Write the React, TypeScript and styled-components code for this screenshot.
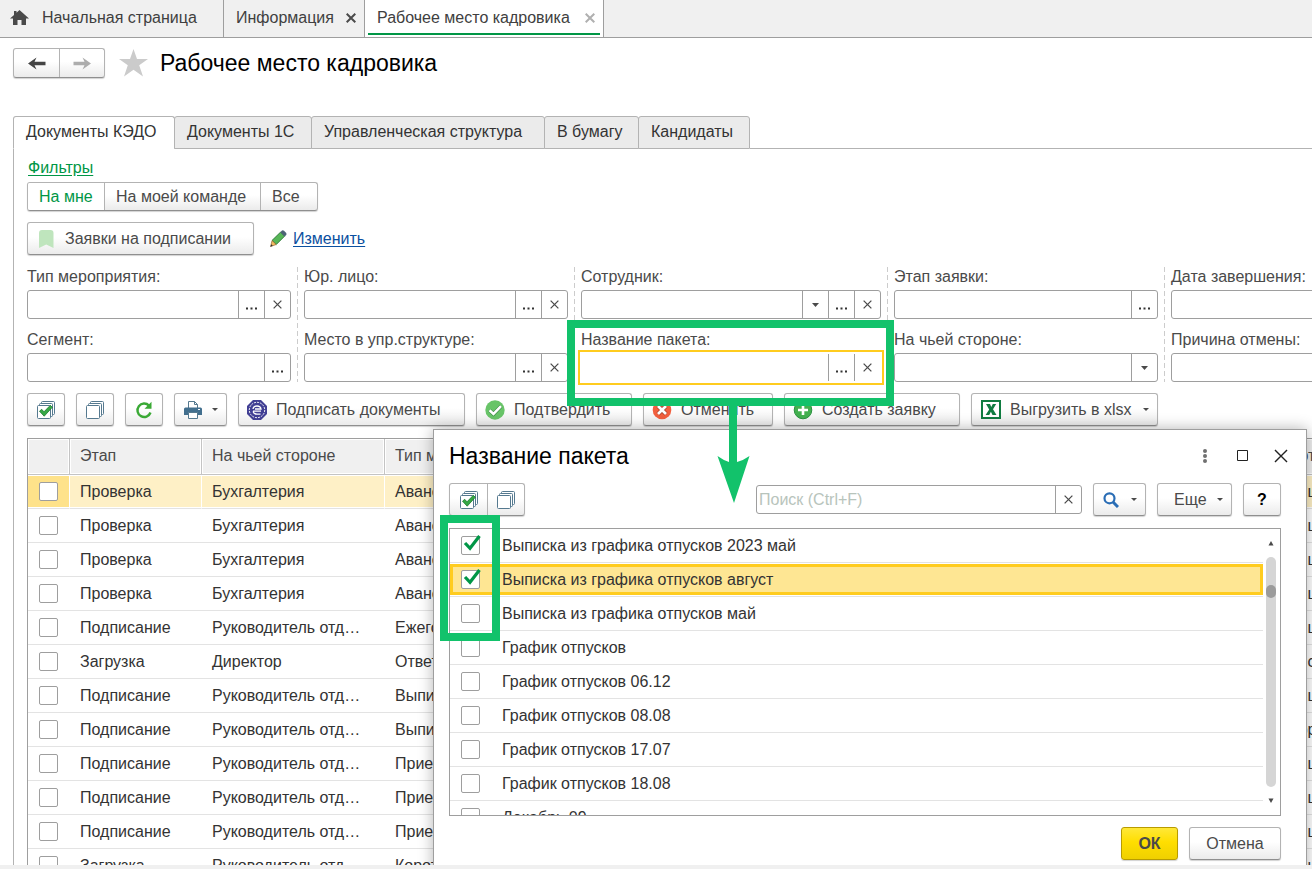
import React from "react";
import styled, { createGlobalStyle, css } from "styled-components";

const GlobalStyle = createGlobalStyle`
  * { box-sizing: border-box; }
  body {
    margin: 0;
    background: #fff;
    color: #4a4a4a;
    font: 16px/19px "Liberation Sans", Arial, sans-serif;
    overflow: hidden;
  }
  button, input { font: inherit; color: inherit; }
  svg { display: block; flex: none; }
`;

const line = "#9e9e9e";
const softLine = "#b3b3b3";
const green = "#009646";
const marker = "#12c26b";
const yellow = "#ffcc1f";

const Shell = styled.div`
  display: flex;
  flex-direction: column;
  height: 100vh;
`;

/* ---------- open windows bar ---------- */

const WindowBar = styled.nav`
  display: flex;
  flex: none;
  height: 38px;
  background: #f0f0f0;
  border-bottom: 1px solid ${line};
`;

const WindowTab = styled.div<{ $width: number; $active?: boolean }>`
  position: relative;
  display: flex;
  align-items: center;
  justify-content: space-between;
  width: ${(p) => p.$width}px;
  padding: 0 8px 2px 12px;
  border-right: 1px solid ${line};
  color: #404040;
  white-space: nowrap;
  ${(p) =>
    p.$active &&
    css`
      background: #fff;
      &::after {
        content: "";
        position: absolute;
        left: 3px;
        right: 3px;
        bottom: 2px;
        height: 2px;
        background: ${green};
      }
    `}
`;

const HomeTab = styled(WindowTab)`
  gap: 13px;
  justify-content: flex-start;
  padding-left: 10px;
`;

const PlainButton = styled.button`
  display: flex;
  align-items: center;
  justify-content: center;
  padding: 0;
  border: 0;
  background: none;
  white-space: nowrap;
`;

/* ---------- page header ---------- */

const Workspace = styled.main`
  position: relative;
  flex: 1;
  min-height: 0;
  overflow: hidden;
`;

const BottomStrip = styled.footer`
  flex: none;
  height: 4px;
  background: #f0f0f0;
`;

const PageHeader = styled.header`
  display: flex;
  align-items: flex-start;
  height: 78px;
  padding: 10px 13px;
`;

const raised = css`
  border: 1px solid ${softLine};
  border-bottom-color: #8f8f8f;
  border-radius: 3px;
  background: linear-gradient(#fff 0%, #fff 45%, #ebebeb 100%);
  box-shadow: 0 1px 1px rgba(0, 0, 0, 0.18);
`;

const SplitGroup = styled.div<{ $height: number }>`
  ${raised}
  display: inline-flex;
  height: ${(p) => p.$height}px;
  overflow: hidden;
`;

const SplitButton = styled(PlainButton)<{ $width: number; $on?: boolean }>`
  width: ${(p) => p.$width}px;
  background: ${(p) => (p.$on ? "#fff" : "none")};
  color: ${(p) => (p.$on ? green : "inherit")};
  & + & {
    border-left: 1px solid ${softLine};
  }
`;

const ScopeButton = styled(SplitButton)`
  justify-content: flex-start;
  padding-left: 11px;
`;

const StarButton = styled(PlainButton)`
  margin: 0 12px 0 14px;
`;

const PageTitle = styled.h1`
  margin: 0;
  color: #000;
  font-size: 23px;
  font-weight: 400;
  line-height: 30px;
`;

/* ---------- page tabs ---------- */

const PageTabs = styled.div`
  display: flex;
  padding-left: 13px;
  height: 33px;
  &::after {
    content: "";
    flex: 1;
    border-bottom: 1px solid ${softLine};
  }
`;

const PageTab = styled.button<{ $width: number; $active?: boolean }>`
  width: ${(p) => p.$width}px;
  padding: 0 0 2px 12px;
  border: 1px solid ${softLine};
  border-bottom-color: ${(p) => (p.$active ? "#fff" : softLine)};
  border-radius: 3px 3px 0 0;
  background: ${(p) => (p.$active ? "#fff" : "#ebebeb")};
  color: #333;
  text-align: left;
  white-space: nowrap;
  & + & {
    margin-left: -1px;
  }
`;

const Panel = styled.section`
  display: flex;
  flex-direction: column;
  align-items: flex-start;
  min-height: 100%;
  margin-left: 13px;
  padding: 9px 0 0 13px;
  border-left: 1px solid ${softLine};
`;

const Link = styled.a<{ $color: string }>`
  color: ${(p) => p.$color};
  text-decoration: underline;
  text-underline-offset: 2px;
`;

const FilterLink = styled(Link)`
  margin: 0 0 5px 1px;
`;

const RequestRow = styled.div`
  display: flex;
  align-items: center;
  margin: 11px 0 12px;
`;

const Button = styled.button<{ $width: number }>`
  ${raised}
  display: flex;
  flex: none;
  align-items: center;
  justify-content: center;
  gap: 9px;
  width: ${(p) => p.$width}px;
  height: 33px;
  padding: 0;
  white-space: nowrap;
`;

const LabelButton = styled(Button)`
  justify-content: flex-start;
  padding-left: 8px;
`;

const MenuButton = styled(Button)`
  justify-content: space-between;
  padding: 0 8px 0 9px;
`;

const MoreButton = styled(MenuButton)`
  padding-left: 16px;
`;

const MenuCaption = styled.span`
  display: flex;
  align-items: center;
  gap: 9px;
`;

const EditLink = styled.span`
  display: flex;
  align-items: center;
  gap: 6px;
  margin-left: 16px;
`;

/* ---------- filters ---------- */

const Filters = styled.div`
  display: flex;
`;

const FilterColumn = styled.div<{ $width: number }>`
  display: flex;
  flex: none;
  flex-direction: column;
  gap: 11px;
  width: ${(p) => p.$width}px;
`;

const Divider = styled.div`
  width: 1px;
  margin: 0 6px;
  background: repeating-linear-gradient(#ccc 0 5px, transparent 5px 8px);
`;

const FieldLabel = styled.label`
  display: block;
  margin-bottom: 4px;
  white-space: nowrap;
`;

const FieldBox = styled.div<{ $focused?: boolean }>`
  display: flex;
  height: 29px;
  border: 1px solid ${(p) => (p.$focused ? "#fff" : line)};
  border-radius: 3px;
  background: #fff;
  ${(p) =>
    p.$focused &&
    css`
      border-radius: 0;
      outline: 2px solid ${yellow};
      outline-offset: 1px;
    `}
`;

const FieldInput = styled.input`
  flex: 1;
  min-width: 0;
  padding: 0 2px;
  border: 0;
  outline: 0;
  background: none;
  &::placeholder {
    color: #b8c4bc;
    opacity: 1;
  }
`;

const FieldButton = styled(PlainButton)`
  width: 26px;
  padding-right: 1px;
  border-left: 1px solid ${line};
`;

/* ---------- command bar ---------- */

const Commands = styled.div`
  display: flex;
  gap: 11px;
  margin: 11px 0 12px;
`;

/* ---------- table ---------- */

const TableFrame = styled.div`
  align-self: stretch;
  overflow: hidden;
  border: 1px solid ${line};
  border-width: 1px 0 0 1px;
`;

const Table = styled.table`
  width: 1451px;
  table-layout: fixed;
  border-collapse: separate;
  border-spacing: 0;
  color: #333;
`;

const Th = styled.th`
  height: 36px;
  padding: 0 0 2px 10px;
  border-right: 1px solid #c4c4c4;
  border-bottom: 1px solid #c4c4c4;
  background: #f0f0f0;
  box-shadow: inset 0 0 0 1px #fff;
  color: #4a4a4a;
  font-weight: 400;
  text-align: left;
  white-space: nowrap;
`;

const Td = styled.td`
  height: 34px;
  padding: 0 0 0 10px;
  border-bottom: 1px solid #e3e3e3;
  white-space: nowrap;
  &:first-child {
    padding-left: 11px;
  }
`;

const Tr = styled.tr<{ $selected?: boolean }>`
  ${(p) =>
    p.$selected &&
    css`
      ${Td} {
        background: #fef0c6;
        border-right: 1px solid #fff;
        box-shadow: inset 0 1px #fff, inset 0 -1px #fff;
      }
      ${Td}:first-child {
        background: #fee28a;
      }
    `}
`;

/* ---------- check box ---------- */

const CheckWrap = styled.span`
  position: relative;
  display: block;
  flex: none;
  width: 19px;
  height: 19px;
`;

const CheckInput = styled.input`
  appearance: none;
  display: block;
  width: 19px;
  height: 19px;
  margin: 0;
  border: 1px solid ${line};
  border-radius: 2px;
  background: #fff;
`;

const CheckMark = styled.svg`
  position: absolute;
  left: 2px;
  top: -2px;
  pointer-events: none;
`;

/* ---------- dialog ---------- */

const Dialog = styled.section`
  position: absolute;
  top: 391px;
  left: 433px;
  right: 5px;
  padding: 10px 25px 20px 15px;
  border: 1px solid ${line};
  background: #fff;
  box-shadow: 0 0 14px rgba(0, 0, 0, 0.3);
`;

const DialogHeader = styled.div`
  display: flex;
  align-items: center;
  height: 31px;
  margin-right: -19px;
`;

const DialogTitle = styled.h2`
  flex: 1;
  margin: 0;
  padding-top: 2px;
  color: #000;
  font-size: 23px;
  font-weight: 400;
  line-height: 31px;
`;

const ControlButton = styled(PlainButton)`
  width: 38px;
  height: 28px;
`;

const DialogTools = styled.div`
  display: flex;
  align-items: center;
  gap: 11px;
  margin: 12px 0;
`;

const SearchBox = styled(FieldBox)`
  width: 326px;
  margin-left: auto;
`;

const HelpMark = styled.span`
  color: #000;
  font-weight: 700;
`;

const ListFrame = styled.div`
  display: flex;
  height: 288px;
  overflow: hidden;
  border: 1px solid ${line};
`;

const List = styled.ul`
  flex: 1;
  margin: 0;
  padding: 0;
  list-style: none;
  color: #333;
`;

const ListItem = styled.li`
  padding: 1px 0;
  border-bottom: 1px solid #e3e3e3;
`;

const ItemLabel = styled.label<{ $current?: boolean }>`
  display: flex;
  align-items: center;
  gap: 22px;
  height: 31px;
  padding: 0 8px;
  border: 3px solid ${(p) => (p.$current ? yellow : "transparent")};
  background: ${(p) => (p.$current ? "#fee693" : "#fff")};
`;

const ScrollBar = styled.div`
  display: flex;
  flex-direction: column;
  align-items: center;
  gap: 10px;
  width: 17px;
  padding: 11px 1px 11px 0;
`;

const ScrollTrack = styled.div`
  flex: 1;
  width: 10px;
  padding-top: 28px;
  border-radius: 5px;
  background: #d5d5d5;
`;

const ScrollThumb = styled.div`
  height: 13px;
  border-radius: 5px;
  background: #9b9b9b;
`;

const DialogActions = styled.div`
  display: flex;
  justify-content: flex-end;
  gap: 11px;
  margin-top: 11px;
`;

const PrimaryButton = styled(Button)`
  border-color: #b89b00;
  background: linear-gradient(#ffe838 0%, #ffde00 45%, #efd000 100%);
  font-weight: 700;
`;

/* ---------- callouts ---------- */

const Frame = styled.div<{ $x: number; $y: number; $w: number; $h: number }>`
  position: absolute;
  left: ${(p) => p.$x}px;
  top: ${(p) => p.$y}px;
  width: ${(p) => p.$w}px;
  height: ${(p) => p.$h}px;
  border: 8px solid ${marker};
  pointer-events: none;
`;

const Arrow = styled.svg`
  position: absolute;
  left: 717px;
  top: 366px;
  pointer-events: none;
`;

/* ---------- icons ---------- */

const HomeIcon = () => (
  <svg width="19" height="16" viewBox="0 0 19 16" fill="#4a4a4a">
    <path d="M9.500 0 19 8.500H16V15H11.500V10H7.500V15H3V8.500H0L4 5V1H6.500V2.700Z" />
  </svg>
);

const CrossIcon = ({ size = 10, color = "#4a4a4a", weight = 1.4 }) => (
  <svg width={size} height={size} viewBox="0 0 10 10" stroke={color} strokeWidth={weight} fill="none">
    <path d="M.7.7 9.300 9.300M9.300.7.7 9.300" />
  </svg>
);

const NavArrow = ({ color, flip }: { color: string; flip?: boolean }) => (
  <svg width="18" height="13" viewBox="0 0 18 13" fill={color}>
    <path d={flip ? "M18 6.500 9.500 .5 11.500 4.800H.5V8.200H11.500L9.500 12.500Z" : "M0 6.500 8.500 .5 6.500 4.800H17.500V8.200H6.500L8.500 12.500Z"} />
  </svg>
);

const StarIcon = () => (
  <svg width="29" height="29" viewBox="0 0 29 29" fill="#cbcbcb">
    <path d="M14.500 1 18 11H29L20.200 17.300 24 28.500 14.500 21.700 5 28.500 8.800 17.300 0 11H11Z" />
  </svg>
);

const BookmarkIcon = () => (
  <svg width="20" height="18" viewBox="0 0 20 18" fill="#bfe5bd">
    <path d="M3 3Q3 0 6 0H14.500Q17.500 0 17.500 3V18L10.200 14.500 3 18Z" />
  </svg>
);

const PencilIcon = () => (
  <svg width="17" height="17" viewBox="0 0 17 17">
    <path d="M2 10.500 10.500 2.200 14.500 6.200 6.200 14.500Z" fill="#57b757" stroke="#2e7d3a" />
    <path d="M2 10.500 6.200 14.500 .6 16.600Z" fill="#f2b95f" stroke="#8a5a2b" strokeWidth=".6" />
    <path d="M1.300 14.300 2.800 15.800 .3 16.800Z" fill="#333" />
    <path d="M10.300 2.200 12 .6Q13 0 14 .8L16 2.800Q17 4 16.200 5L14.700 6.400Z" fill="#4d6475" />
  </svg>
);

const DotsIcon = () => (
  <svg width="11" height="3" viewBox="0 0 11 3" fill="#333">
    <path d="M0 .5H2V2.500H0ZM4.500 .5H6.500V2.500H4.500ZM9 .5H11V2.500H9Z" />
  </svg>
);

const CaretIcon = () => (
  <svg width="7" height="4" viewBox="0 0 7 4" fill="#4a4a4a">
    <path d="M0 0H7L3.500 4Z" />
  </svg>
);

const SmallCaret = () => (
  <svg width="6" height="3" viewBox="0 0 6 3" fill="#4a4a4a">
    <path d="M0 0H6L3 3Z" />
  </svg>
);

const StackIcon = ({ checked }: { checked?: boolean }) => (
  <svg width="18" height="18" viewBox="0 0 18 18" fill="#fff" stroke="#55798f">
    <rect x="4.500" y=".5" width="13" height="13" rx="1" />
    <rect x="2.500" y="2.500" width="13" height="13" rx="1" />
    <rect x=".5" y="4.500" width="13" height="13" rx="1" />
    {checked && <path d="M2.500 10.200 4.700 8.300 7 10.800 13.300 4.300 15.300 6.300 7.200 15.200Z" fill="#35a845" stroke="#1c7a30" strokeWidth=".8" />}
  </svg>
);

const RefreshIcon = () => (
  <svg width="18" height="18" viewBox="0 0 18 18">
    <path d="M14 4.600A6.700 6.700 0 1 0 15.500 11.500" fill="none" stroke="#3aa935" strokeWidth="2.400" />
    <path d="M16.500 .8V7.800H9.500Z" fill="#3aa935" />
  </svg>
);

const PrinterIcon = () => (
  <svg width="18" height="18" viewBox="0 0 18 18">
    <path d="M4.500 7V.5H10.500L13.500 3.500V7" fill="#fff" stroke="#55798f" />
    <path d="M10.500 .5V3.500H13.500" fill="none" stroke="#55798f" />
    <path d="M1.500 6.500H16.500Q18 6.500 18 8V14H0V8Q0 6.500 1.500 6.500Z" fill="#426f8e" />
    <path d="M4.500 11.500H13.500V17.500H4.500Z" fill="#fff" stroke="#55798f" />
    <path d="M14 8.500H16" stroke="#fff" />
  </svg>
);

const SealIcon = () => (
  <svg width="20" height="20" viewBox="0 0 20 20">
    <path d="M6 0H14L20 6V14L14 20H6L0 14V6Z" fill="#413f94" />
    <circle cx="10" cy="10" r="7.700" fill="none" stroke="#fff" strokeWidth=".9" strokeDasharray="2 1" />
    <path d="M6 9Q6.500 6 10 6T14 9H8M14 11.200H6M6 11.500Q7 14.200 10 14.200H13.500" fill="none" stroke="#fff" strokeWidth="1.300" />
  </svg>
);

const ConfirmIcon = () => (
  <svg width="20" height="20" viewBox="0 0 20 20">
    <circle cx="10" cy="10" r="9.700" fill="#68c468" />
    <path d="M4.500 10.200 8.500 14 16 6.200" fill="none" stroke="#2f7f3a" strokeWidth="3.600" />
    <path d="M4.500 10.200 8.500 14 16 6.200" fill="none" stroke="#fff" strokeWidth="2.600" />
  </svg>
);

const RejectIcon = () => (
  <svg width="20" height="20" viewBox="0 0 20 20">
    <circle cx="10" cy="10" r="9.300" fill="#f15f3e" />
    <path d="M6 6 14 14M14 6 6 14" stroke="#9c3a22" strokeWidth="4" />
    <path d="M6 6 14 14M14 6 6 14" stroke="#fff" strokeWidth="2.800" />
  </svg>
);

const AddIcon = () => (
  <svg width="20" height="20" viewBox="0 0 20 20">
    <circle cx="10" cy="10" r="8.800" fill="#43b04f" stroke="#2b9140" />
    <path d="M10 5V15M5 10H15" stroke="#fff" strokeWidth="2.600" />
  </svg>
);

const SheetIcon = () => (
  <svg width="20" height="19" viewBox="0 0 20 19">
    <rect x="1" y="1" width="18" height="17" fill="#fff" stroke="#107c41" strokeWidth="2" />
    <path d="M5 4H9L10.300 7 11.800 4H15.200L12 9.300 15.500 15H11.500L9.900 11.800 8.200 15H4.600L8.200 9.400Z" fill="#107c41" />
  </svg>
);

const SearchIcon = () => (
  <svg width="16" height="16" viewBox="0 0 16 16" fill="none" stroke="#2a6db5">
    <circle cx="6.500" cy="6.300" r="5" strokeWidth="2.200" />
    <path d="M10 10 15 15" strokeWidth="3" />
  </svg>
);

const KebabIcon = () => (
  <svg width="4" height="14" viewBox="0 0 4 14" fill="#707070">
    <circle cx="2" cy="2" r="2" />
    <circle cx="2" cy="7" r="2" />
    <circle cx="2" cy="12" r="2" />
  </svg>
);

const MaximizeIcon = () => (
  <svg width="12" height="12" viewBox="0 0 12 12" fill="none" stroke="#222">
    <path d="M.5 .5H10.500V10.500H.5Z" />
  </svg>
);

const ScrollArrow = ({ down }: { down?: boolean }) => (
  <svg width="6" height="7" viewBox="0 0 6 7" fill="#4a4a4a">
    <path d={down ? "M.5 1.500H5.500L3 6Z" : "M.5 5.500H5.500L3 1Z"} />
  </svg>
);

/* ---------- composite parts ---------- */

const Check = ({ label, checked }: { label?: string; checked?: boolean }) => (
  <CheckWrap>
    <CheckInput type="checkbox" defaultChecked={checked} aria-label={label} />
    {checked && (
      <CheckMark width="18" height="18" viewBox="0 0 18 18">
        <path d="M2 9 7 14.300 16.500 2" fill="none" stroke={green} strokeWidth="3.200" />
      </CheckMark>
    )}
  </CheckWrap>
);

type Control = "list" | "pick" | "clear";

interface FieldSpec {
  id: string;
  label: string;
  controls: Control[];
  focused?: boolean;
}

const controlNames: Record<Control, string> = { list: "Список", pick: "Выбрать", clear: "Очистить" };

const PickDots = styled.span`
  padding-top: 8px;
`;

const ControlIcon = ({ kind }: { kind: Control }) => {
  if (kind === "list") return <CaretIcon />;
  if (kind === "clear") return <CrossIcon size={9} />;
  return (
    <PickDots>
      <DotsIcon />
    </PickDots>
  );
};

const Field = ({ id, label, controls, focused }: FieldSpec) => (
  <div>
    <FieldLabel htmlFor={id}>{label}</FieldLabel>
    <FieldBox $focused={focused}>
      <FieldInput id={id} type="text" />
      {controls.map((kind) => (
        <FieldButton key={kind} type="button" aria-label={controlNames[kind]}>
          <ControlIcon kind={kind} />
        </FieldButton>
      ))}
    </FieldBox>
  </div>
);

/* ---------- data ---------- */

const filterColumns: { width: number; fields: FieldSpec[] }[] = [
  {
    width: 264,
    fields: [
      { id: "event", label: "Тип мероприятия:", controls: ["pick", "clear"] },
      { id: "segment", label: "Сегмент:", controls: ["pick"] },
    ],
  },
  {
    width: 264,
    fields: [
      { id: "entity", label: "Юр. лицо:", controls: ["pick", "clear"] },
      { id: "place", label: "Место в упр.структуре:", controls: ["pick", "clear"] },
    ],
  },
  {
    width: 300,
    fields: [
      { id: "employee", label: "Сотрудник:", controls: ["list", "pick", "clear"] },
      { id: "package", label: "Название пакета:", controls: ["pick", "clear"], focused: true },
    ],
  },
  {
    width: 264,
    fields: [
      { id: "stage", label: "Этап заявки:", controls: ["pick"] },
      { id: "side", label: "На чьей стороне:", controls: ["list"] },
    ],
  },
  {
    width: 264,
    fields: [
      { id: "finish", label: "Дата завершения:", controls: ["pick"] },
      { id: "reason", label: "Причина отмены:", controls: ["pick"] },
    ],
  },
];

const rows = [
  ["Проверка", "Бухгалтерия", "Авансовый отчет", "Лищенко"],
  ["Проверка", "Бухгалтерия", "Авансовый отчет", "Лищенко"],
  ["Проверка", "Бухгалтерия", "Авансовый отчет", "Лищенко"],
  ["Проверка", "Бухгалтерия", "Авансовый отчет", "Лищенко"],
  ["Подписание", "Руководитель отд…", "Ежегодный отпуск", "Лищенко"],
  ["Загрузка", "Директор", "Ответ на запрос", "Лисин"],
  ["Подписание", "Руководитель отд…", "Выписка из графика", "Лищенко"],
  ["Подписание", "Руководитель отд…", "Выписка из графика", "Воронов"],
  ["Подписание", "Руководитель отд…", "Прием на работу", "Лищенко"],
  ["Подписание", "Руководитель отд…", "Прием на работу", "Лищенко"],
  ["Подписание", "Руководитель отд…", "Прием на работу", "Лищенко"],
  ["Загрузка", "Руководитель отд…", "Короткий отпуск", "Лищенко"],
];

const packages = [
  { name: "Выписка из графика отпусков 2023 май", checked: true },
  { name: "Выписка из графика отпусков август", checked: true, current: true },
  { name: "Выписка из графика отпусков май" },
  { name: "График отпусков" },
  { name: "График отпусков 06.12" },
  { name: "График отпусков 08.08" },
  { name: "График отпусков 17.07" },
  { name: "График отпусков 18.08" },
  { name: "Декабрь 09" },
];

export default function App() {
  return (
    <Shell>
      <GlobalStyle />
      <WindowBar>
        <HomeTab $width={224}>
          <HomeIcon />
          Начальная страница
        </HomeTab>
        <WindowTab $width={141}>
          Информация
          <PlainButton type="button" aria-label="Закрыть">
            <CrossIcon weight={2} />
          </PlainButton>
        </WindowTab>
        <WindowTab $width={239} $active>
          Рабочее место кадровика
          <PlainButton type="button" aria-label="Закрыть">
            <CrossIcon weight={2} color="#b0b0b0" />
          </PlainButton>
        </WindowTab>
      </WindowBar>

      <Workspace>
        <PageHeader>
          <SplitGroup $height={30}>
            <SplitButton $width={45} type="button" aria-label="Назад">
              <NavArrow color="#444" />
            </SplitButton>
            <SplitButton $width={45} type="button" aria-label="Вперед">
              <NavArrow color="#adadad" flip />
            </SplitButton>
          </SplitGroup>
          <StarButton type="button" aria-label="В избранное">
            <StarIcon />
          </StarButton>
          <PageTitle>Рабочее место кадровика</PageTitle>
        </PageHeader>

        <PageTabs>
          <PageTab $width={162} $active type="button">Документы КЭДО</PageTab>
          <PageTab $width={138} type="button">Документы 1С</PageTab>
          <PageTab $width={234} type="button">Управленческая структура</PageTab>
          <PageTab $width={95} type="button">В бумагу</PageTab>
          <PageTab $width={112} type="button">Кандидаты</PageTab>
        </PageTabs>

        <Panel>
          <FilterLink $color={green} href="#filters">Фильтры</FilterLink>
          <SplitGroup $height={29}>
            <ScopeButton $width={76} $on type="button">На мне</ScopeButton>
            <ScopeButton $width={156} type="button">На моей команде</ScopeButton>
            <ScopeButton $width={57} type="button">Все</ScopeButton>
          </SplitGroup>

          <RequestRow>
            <LabelButton $width={227} type="button">
              <BookmarkIcon />
              Заявки на подписании
            </LabelButton>
            <EditLink>
              <PencilIcon />
              <Link $color="#0b50a0" href="#edit">Изменить</Link>
            </EditLink>
          </RequestRow>

          <Filters>
            {filterColumns.map((column, i) => (
              <React.Fragment key={column.fields[0].id}>
                {i > 0 && <Divider />}
                <FilterColumn $width={column.width}>
                  {column.fields.map((field) => (
                    <Field key={field.id} {...field} />
                  ))}
                </FilterColumn>
              </React.Fragment>
            ))}
          </Filters>

          <Commands>
            <Button $width={38} type="button" aria-label="Отметить все"><StackIcon checked /></Button>
            <Button $width={38} type="button" aria-label="Снять отметки"><StackIcon /></Button>
            <Button $width={38} type="button" aria-label="Обновить"><RefreshIcon /></Button>
            <MenuButton $width={53} type="button" aria-label="Печать"><PrinterIcon /><SmallCaret /></MenuButton>
            <LabelButton $width={227} type="button"><SealIcon />Подписать документы</LabelButton>
            <LabelButton $width={156} type="button"><ConfirmIcon />Подтвердить</LabelButton>
            <LabelButton $width={130} type="button"><RejectIcon />Отменить</LabelButton>
            <LabelButton $width={176} type="button"><AddIcon />Создать заявку</LabelButton>
            <MenuButton $width={187} type="button">
              <MenuCaption><SheetIcon />Выгрузить в xlsx</MenuCaption>
              <SmallCaret />
            </MenuButton>
          </Commands>

          <TableFrame>
            <Table>
              <colgroup>
                <col width="42" />
                <col width="132" />
                <col width="183" />
                <col width="893" />
                <col width="201" />
              </colgroup>
              <thead>
                <tr>
                  <Th aria-label="Отметка" />
                  <Th>Этап</Th>
                  <Th>На чьей стороне</Th>
                  <Th>Тип мероприятия</Th>
                  <Th>Сотрудник</Th>
                </tr>
              </thead>
              <tbody>
                {rows.map((row, i) => (
                  <Tr key={i} $selected={i === 0}>
                    <Td><Check label={`Отметить строку ${i + 1}`} /></Td>
                    {row.map((cell, j) => (
                      <Td key={j}>{cell}</Td>
                    ))}
                  </Tr>
                ))}
              </tbody>
            </Table>
          </TableFrame>
        </Panel>

        <Dialog role="dialog" aria-labelledby="dialog-title">
          <DialogHeader>
            <DialogTitle id="dialog-title">Название пакета</DialogTitle>
            <ControlButton type="button" aria-label="Меню"><KebabIcon /></ControlButton>
            <ControlButton type="button" aria-label="Развернуть"><MaximizeIcon /></ControlButton>
            <ControlButton type="button" aria-label="Закрыть"><CrossIcon size={14} weight={1} color="#222" /></ControlButton>
          </DialogHeader>

          <DialogTools>
            <SplitGroup $height={33}>
              <SplitButton $width={37} type="button" aria-label="Отметить все"><StackIcon checked /></SplitButton>
              <SplitButton $width={37} type="button" aria-label="Снять отметки"><StackIcon /></SplitButton>
            </SplitGroup>
            <SearchBox>
              <FieldInput type="text" placeholder="Поиск (Ctrl+F)" aria-label="Поиск" />
              <FieldButton type="button" aria-label="Очистить"><CrossIcon size={9} /></FieldButton>
            </SearchBox>
            <MenuButton $width={53} type="button" aria-label="Найти"><SearchIcon /><SmallCaret /></MenuButton>
            <MoreButton $width={75} type="button">Еще<SmallCaret /></MoreButton>
            <Button $width={38} type="button"><HelpMark>?</HelpMark></Button>
          </DialogTools>

          <ListFrame>
            <List>
              {packages.map((item) => (
                <ListItem key={item.name}>
                  <ItemLabel $current={item.current}>
                    <Check checked={item.checked} />
                    {item.name}
                  </ItemLabel>
                </ListItem>
              ))}
            </List>
            <ScrollBar>
              <ScrollArrow />
              <ScrollTrack><ScrollThumb /></ScrollTrack>
              <ScrollArrow down />
            </ScrollBar>
          </ListFrame>

          <DialogActions>
            <PrimaryButton $width={57} type="button">ОК</PrimaryButton>
            <Button $width={92} type="button">Отмена</Button>
          </DialogActions>
        </Dialog>

        <Frame $x={567} $y={282} $w={327} $h={86} />
        <Frame $x={440} $y={477} $w={60} $h={126} />
        <Arrow width="33" height="100" viewBox="0 0 33 100" fill={marker}>
          <path d="M12 0H20V58Q27 56 32.500 52L17 99 .5 52Q6 56 12 58Z" />
        </Arrow>
      </Workspace>
      <BottomStrip />
    </Shell>
  );
}
